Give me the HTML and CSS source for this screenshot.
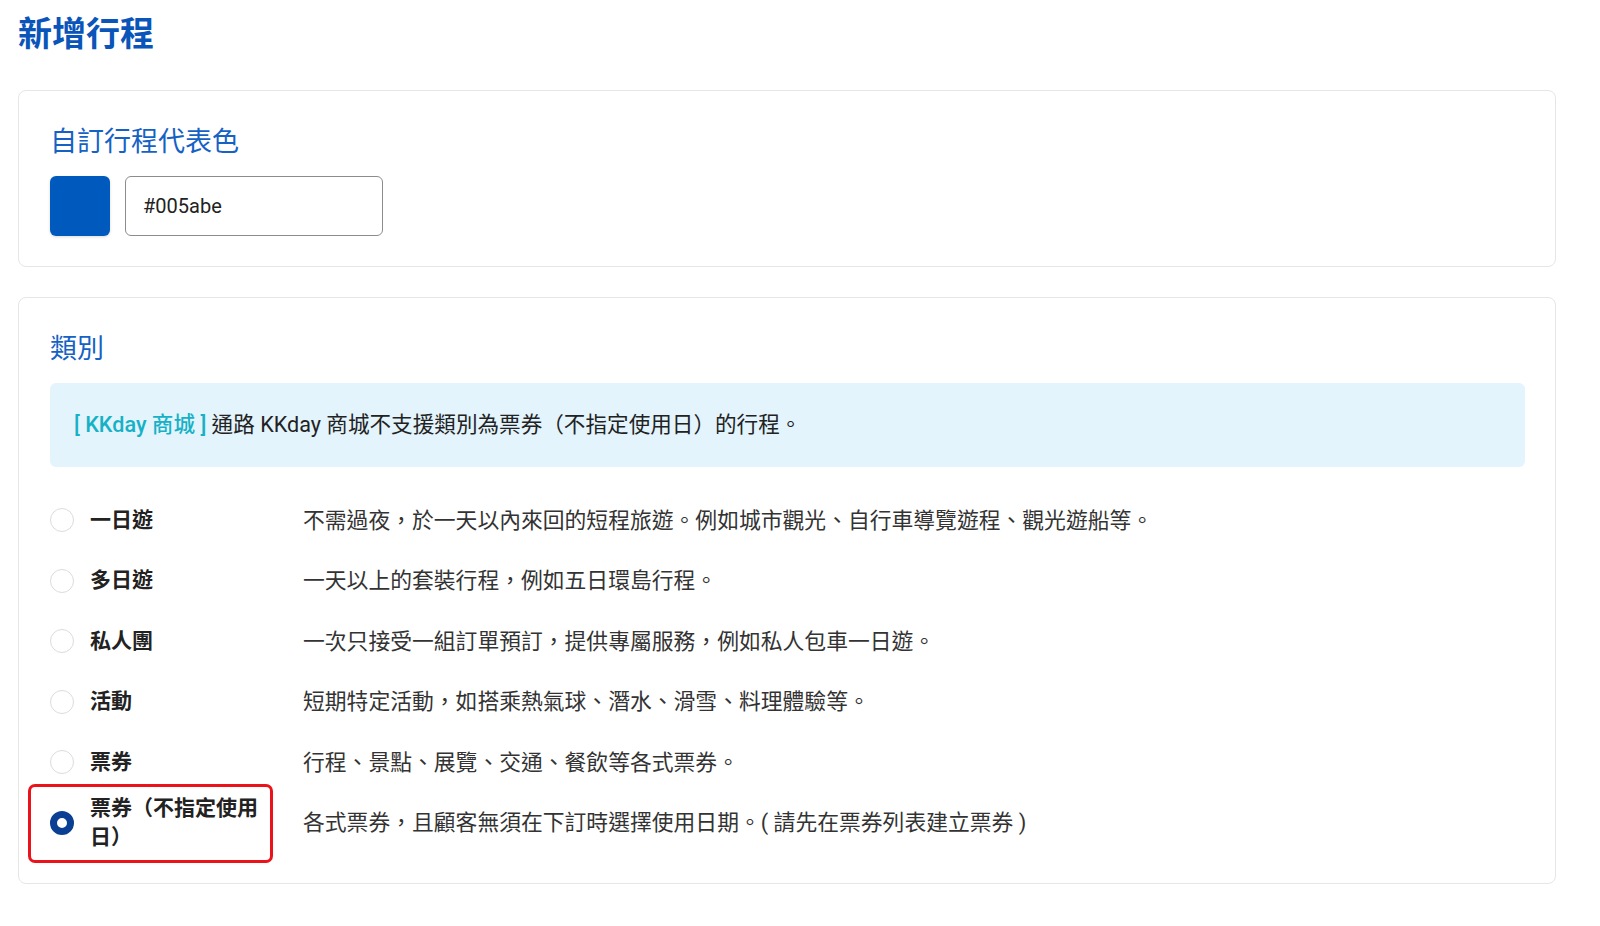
FILE: index.html
```html
<!DOCTYPE html>
<html lang="zh-Hant">

    <head>
        <meta charset="UTF-8">
        <meta name="viewport" content="width=device-width, initial-scale=1.0">
        <title>新增行程</title>

        <link rel="stylesheet" href="styles.css">
    </head>

    <body>
        <div class="page">
            <h1 class="pageTitle">新增行程</h1>

            <section class="card">
                <h2 class="cardTitle">自訂行程代表色</h2>
                <div class="colorRow">
                    <div class="colorSwatch"></div>
                    <input class="colorInput" type="text" value="#005abe">
                </div>
            </section>

            <section class="card">
                <h2 class="cardTitle">類別</h2>
                <div class="notice">
                    <span class="notice__tag">[ KKday 商城 ]</span> 通路 KKday 商城不支援類別為票券（不指定使用日）的行程。
                </div>

                <ul class="typeList">
                    <li class="typeItem">
                        <span class="radio"></span>
                        <span class="typeItem__label">一日遊</span>
                        <span class="typeItem__desc">不需過夜，於一天以內來回的短程旅遊。例如城市觀光、自行車導覽遊程、觀光遊船等。</span>
                    </li>
                    <li class="typeItem">
                        <span class="radio"></span>
                        <span class="typeItem__label">多日遊</span>
                        <span class="typeItem__desc">一天以上的套裝行程，例如五日環島行程。</span>
                    </li>
                    <li class="typeItem">
                        <span class="radio"></span>
                        <span class="typeItem__label">私人團</span>
                        <span class="typeItem__desc">一次只接受一組訂單預訂，提供專屬服務，例如私人包車一日遊。</span>
                    </li>
                    <li class="typeItem">
                        <span class="radio"></span>
                        <span class="typeItem__label">活動</span>
                        <span class="typeItem__desc">短期特定活動，如搭乘熱氣球、潛水、滑雪、料理體驗等。</span>
                    </li>
                    <li class="typeItem">
                        <span class="radio"></span>
                        <span class="typeItem__label">票券</span>
                        <span class="typeItem__desc">行程、景點、展覽、交通、餐飲等各式票券。</span>
                    </li>
                    <li class="typeItem typeItem--marked">
                        <span class="radio radio--checked"></span>
                        <span class="typeItem__label">票券（不指定使用日）</span>
                        <span class="typeItem__desc">各式票券，且顧客無須在下訂時選擇使用日期。( 請先在票券列表建立票券 )</span>
                    </li>
                </ul>
            </section>
        </div>
    </body>

</html>
```

FILE: styles.css
```css
* {
    margin: 0;
    padding: 0;
    box-sizing: border-box;
}

body {
    background: #fff;
    color: #222;
    font-family: Roboto, "Noto Sans CJK TC", sans-serif;
}

.page {
    padding: 13px 44px 0 18px;
}

.pageTitle {
    font-size: 34px;
    line-height: 43px;
    font-weight: 700;
    color: #0a55b9;
    margin-bottom: 34px;
}

.card {
    border: 1px solid #e6e6e6;
    border-radius: 8px;
    padding: 31px 30px 30px 31px;
    margin-bottom: 30px;
}

.cardTitle {
    font-size: 27px;
    line-height: 40px;
    font-weight: 400;
    color: #1562c4;
    margin-bottom: 14px;
}

.colorRow {
    display: flex;
    gap: 15px;
}

.colorSwatch {
    width: 60px;
    height: 60px;
    border-radius: 6px;
    background: #005abe;
    box-shadow: 0 1px 3px rgba(0, 0, 0, 0.15);
}

.colorInput {
    width: 258px;
    height: 60px;
    border: 1px solid #8c8c8c;
    border-radius: 6px;
    padding: 0 17px;
    font-family: Roboto, "Noto Sans CJK TC", sans-serif;
    font-size: 20px;
    color: #222;
    outline: none;
}

.notice {
    background: #e3f4fd;
    border-radius: 6px;
    padding: 27px 24px;
    font-size: 21.6px;
    line-height: 30px;
    color: #222;
    margin-bottom: 23px;
}

.notice__tag {
    color: #17b1c6;
    font-weight: 500;
}

.typeList {
    list-style: none;
}

.typeItem {
    display: flex;
    align-items: center;
    min-height: 60.5px;
    position: relative;
}

.radio {
    flex: none;
    width: 24px;
    height: 24px;
    border-radius: 50%;
    border: 1px solid #dcdcdc;
    background: #fff;
    margin-right: 16px;
}

.radio--checked {
    border: 7px solid #0b3f94;
}

.typeItem__label {
    flex: none;
    width: 180px;
    font-size: 21px;
    line-height: 29px;
    font-weight: 700;
    color: #222;
}

.typeItem__desc {
    margin-left: 33px;
    font-size: 21.8px;
    line-height: 29px;
    color: #333;
}

/* highlight box drawn over the last option */
.typeItem--marked::before {
    content: "";
    position: absolute;
    left: -22px;
    top: -9px;
    width: 239px;
    height: 73px;
    border: 3px solid #ec1219;
    border-radius: 7px;
    pointer-events: none;
}
```
